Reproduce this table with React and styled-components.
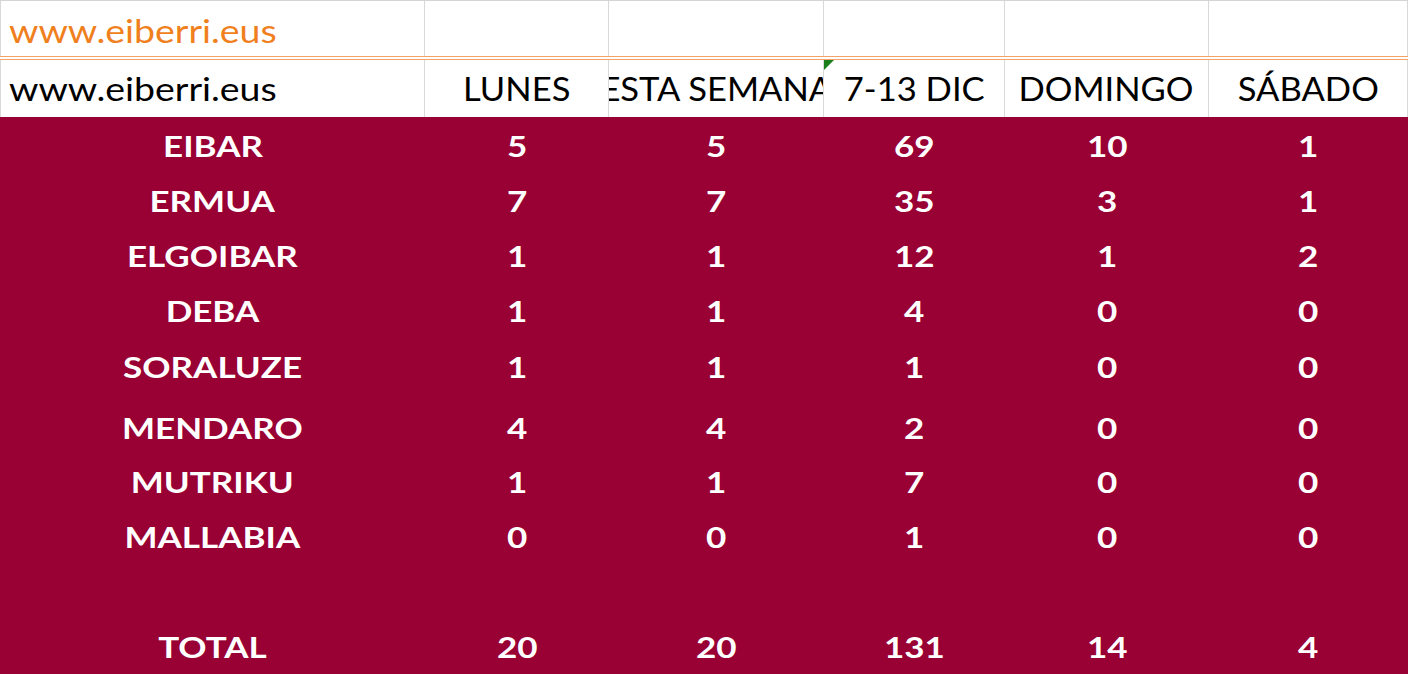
import React from "react";
import styled, { createGlobalStyle } from "styled-components";

const GlobalStyle = createGlobalStyle`
  html, body {
    margin: 0;
    padding: 0;
    background: #fff;
    overflow: hidden;
  }
  body {
    font-family: Lato, "Open Sans", sans-serif;
  }
`;

const COLS = "425px 184px 215px 181px 204px 1fr";

const Sheet = styled.div`
  width: 1408px;
  height: 674px;
  display: flex;
  flex-direction: column;
  border-top: 1px solid #d4d4d4;
  box-sizing: border-box;
  overflow: hidden;
`;

const Row = styled.div`
  display: grid;
  grid-template-columns: ${COLS};
  height: ${(p) => p.$h}px;
  box-sizing: border-box;
  flex: none;
`;

const Cell = styled.div`
  position: relative;
  display: flex;
  align-items: center;
  justify-content: ${(p) => (p.$left ? "flex-start" : "center")};
  padding-left: ${(p) => (p.$left ? "8px" : "0")};
  border-right: 1px solid #d9d9d9;
  overflow: hidden;
  white-space: nowrap;
  &:first-child {
    border-left: 1px solid #d9d9d9;
  }
`;

const TopRow = styled(Row)`
  border-bottom: 4px double #f5a26a;

  ${Cell} {
    padding-top: 5px;
  }
`;

const Label = styled.span`
  display: inline-block;
  font-size: 32px;
  line-height: 1;
  color: ${(p) => p.$color || "#000"};
  transform: scaleX(${(p) => p.$sx || 1.08});
  transform-origin: ${(p) => (p.$left ? "left center" : "center")};
`;

const Flag = styled.span`
  position: absolute;
  left: 0;
  top: 0;
  width: 0;
  height: 0;
  border-top: 10px solid #1b7f1b;
  border-right: 10px solid transparent;
  z-index: 1;
`;

const Body = styled.div`
  flex: 1;
  background: #990033;
  display: flex;
  flex-direction: column;
`;

const DataCell = styled.div`
  display: flex;
  align-items: flex-end;
  justify-content: center;
  padding-bottom: 11px;
  box-sizing: border-box;
`;

const Value = styled.span`
  display: inline-block;
  color: #fff;
  font-weight: 700;
  font-size: 28px;
  line-height: 1;
  transform: scaleX(1.25);
`;

const headers = ["LUNES", "ESTA SEMANA", "7-13 DIC", "DOMINGO", "SÁBADO"];

const rows = [
  { name: "EIBAR", v: [5, 5, 69, 10, 1], h: 54 },
  { name: "ERMUA", v: [7, 7, 35, 3, 1], h: 55 },
  { name: "ELGOIBAR", v: [1, 1, 12, 1, 2], h: 55 },
  { name: "DEBA", v: [1, 1, 4, 0, 0], h: 55 },
  { name: "SORALUZE", v: [1, 1, 1, 0, 0], h: 56 },
  { name: "MENDARO", v: [4, 4, 2, 0, 0], h: 61 },
  { name: "MUTRIKU", v: [1, 1, 7, 0, 0], h: 54 },
  { name: "MALLABIA", v: [0, 0, 1, 0, 0], h: 55 },
  { name: "", v: ["", "", "", "", ""], h: 55 },
  { name: "TOTAL", v: [20, 20, 131, 14, 4], h: 55 },
];

export default function App() {
  return (
    <Sheet>
      <GlobalStyle />
      <TopRow $h={59}>
        <Cell $left>
          <Label $left $sx={1.17} $color="#f07f1e">
            www.eiberri.eus
          </Label>
        </Cell>
        {headers.map((_, i) => (
          <Cell key={i} />
        ))}
      </TopRow>
      <Row $h={57}>
        <Cell $left>
          <Label $left $sx={1.17}>
            www.eiberri.eus
          </Label>
        </Cell>
        {headers.map((h, i) => (
          <Cell key={h}>
            {i === 2 && <Flag />}
            <Label>{h}</Label>
          </Cell>
        ))}
      </Row>
      <Body>
        {rows.map((r, i) => (
          <Row key={i} $h={r.h}>
            <DataCell>
              <Value>{r.name}</Value>
            </DataCell>
            {r.v.map((n, j) => (
              <DataCell key={j}>
                <Value>{n}</Value>
              </DataCell>
            ))}
          </Row>
        ))}
      </Body>
    </Sheet>
  );
}
